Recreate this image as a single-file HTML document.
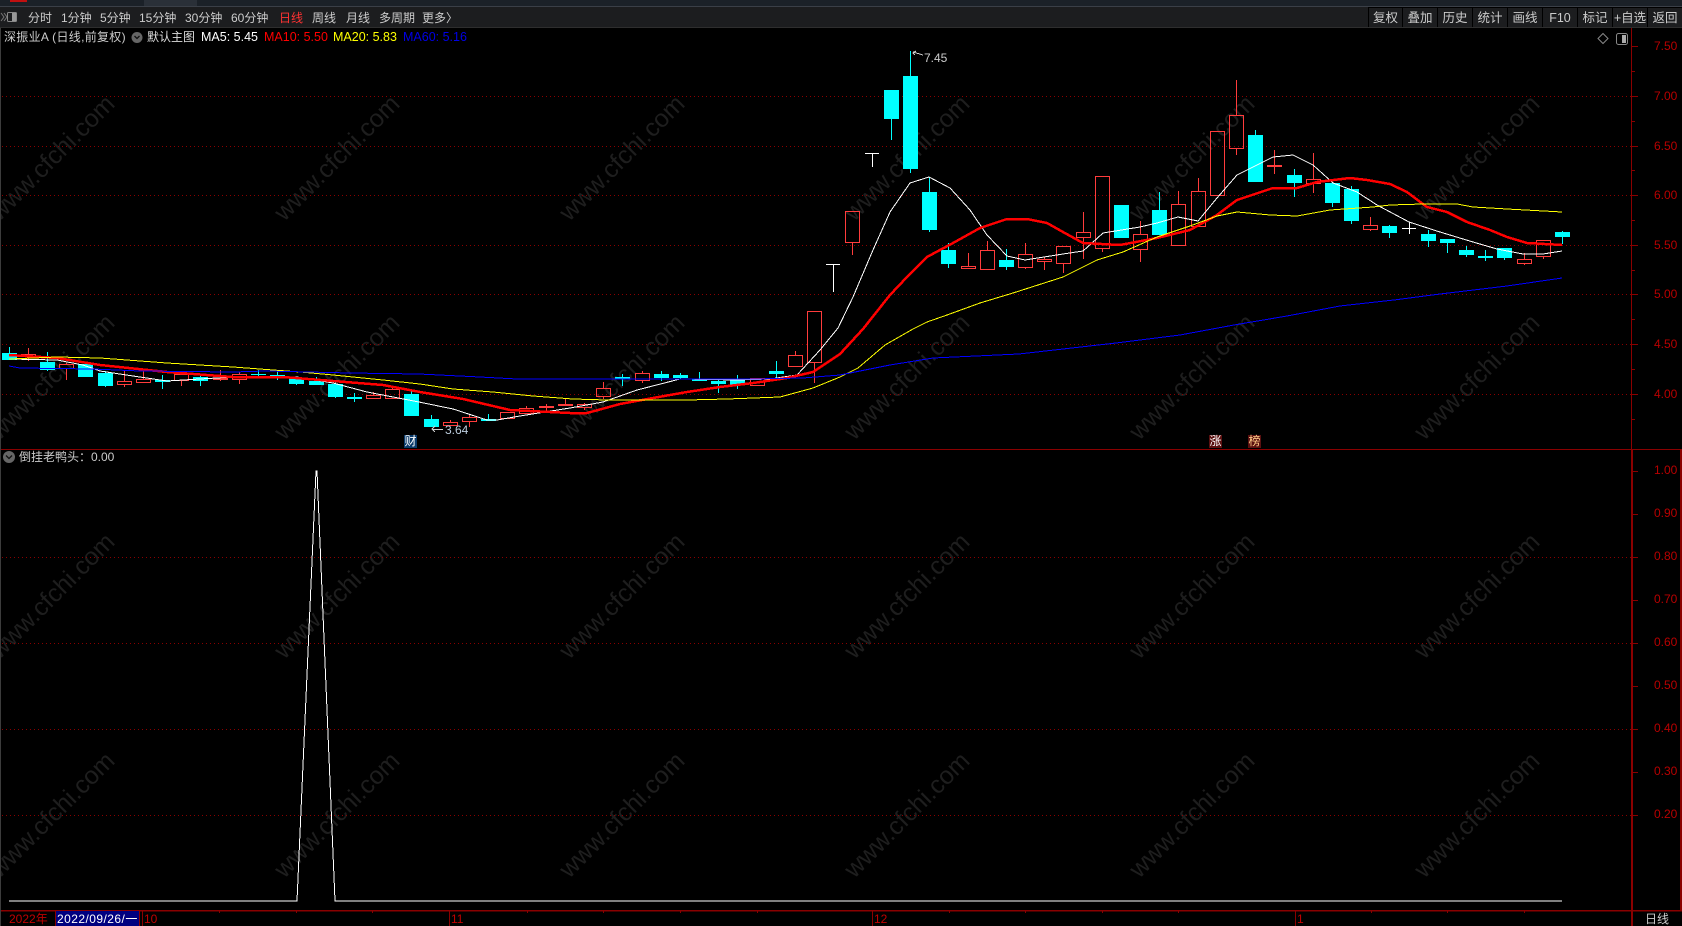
<!DOCTYPE html>
<html lang="zh">
<head>
<meta charset="utf-8">
<title>深振业A</title>
<style>
html,body{margin:0;padding:0;background:#000;}
#p{position:relative;width:1682px;height:926px;overflow:hidden;background:#000;font-family:"Liberation Sans","Noto Sans CJK SC",sans-serif;font-size:12px;color:#ccc;}
.t{position:absolute;white-space:pre;line-height:16px;height:16px;}
.a{position:absolute;left:1654px;white-space:pre;line-height:16px;color:#b80000;font-size:12px;}
.b{position:absolute;top:8px;height:19px;background:#1c1d1f;text-align:center;line-height:20px;font-size:12.5px;color:#ccc;}
.w{position:absolute;width:200px;height:30px;line-height:30px;text-align:center;font-size:25px;color:#1e1e1e;transform:rotate(-45deg);white-space:pre;}
.k{position:absolute;width:13px;height:13px;line-height:13px;text-align:center;font-size:12px;top:435px;}
svg{position:absolute;left:0;top:0;}
</style>
</head>
<body>
<div id="p">
<div style="position:absolute;left:0;top:0;width:1682px;height:6px;background:#1b2128"></div>
<div style="position:absolute;left:144px;top:0;width:53px;height:6px;background:#2a3038"></div>
<div style="position:absolute;left:10px;top:0;width:17px;height:2px;background:#c01010"></div>
<div style="position:absolute;left:0;top:6px;width:1682px;height:1px;background:#3a3f47"></div>
<div style="position:absolute;left:0;top:7px;width:1682px;height:20px;background:#1c1d1f"></div>
<div style="position:absolute;left:0;top:27px;width:1682px;height:1px;background:#2e2e2e"></div>

<div class="w" style="left:-48px;top:143px">www.cfchi.com</div>
<div class="w" style="left:237px;top:143px">www.cfchi.com</div>
<div class="w" style="left:522px;top:143px">www.cfchi.com</div>
<div class="w" style="left:807px;top:143px">www.cfchi.com</div>
<div class="w" style="left:1092px;top:143px">www.cfchi.com</div>
<div class="w" style="left:1377px;top:143px">www.cfchi.com</div>
<div class="w" style="left:-48px;top:362px">www.cfchi.com</div>
<div class="w" style="left:237px;top:362px">www.cfchi.com</div>
<div class="w" style="left:522px;top:362px">www.cfchi.com</div>
<div class="w" style="left:807px;top:362px">www.cfchi.com</div>
<div class="w" style="left:1092px;top:362px">www.cfchi.com</div>
<div class="w" style="left:1377px;top:362px">www.cfchi.com</div>
<div class="w" style="left:-48px;top:581px">www.cfchi.com</div>
<div class="w" style="left:237px;top:581px">www.cfchi.com</div>
<div class="w" style="left:522px;top:581px">www.cfchi.com</div>
<div class="w" style="left:807px;top:581px">www.cfchi.com</div>
<div class="w" style="left:1092px;top:581px">www.cfchi.com</div>
<div class="w" style="left:1377px;top:581px">www.cfchi.com</div>
<div class="w" style="left:-48px;top:800px">www.cfchi.com</div>
<div class="w" style="left:237px;top:800px">www.cfchi.com</div>
<div class="w" style="left:522px;top:800px">www.cfchi.com</div>
<div class="w" style="left:807px;top:800px">www.cfchi.com</div>
<div class="w" style="left:1092px;top:800px">www.cfchi.com</div>
<div class="w" style="left:1377px;top:800px">www.cfchi.com</div>

<svg width="1682" height="926" viewBox="0 0 1682 926" shape-rendering="crispEdges" fill="none">
<!-- frame -->
<path d="M0.5 28V926" stroke="#3c3c3c"/>
<path d="M1631.5 28V449" stroke="#8a0000"/>
<path d="M1632 449V926" stroke="#8a0000" stroke-width="2"/>
<path d="M1 449.5H1682" stroke="#8a0000"/>
<path d="M1 910.5H1682" stroke="#8a0000" stroke-width="1.5"/>
<path d="M1681 449V910" stroke="#8a0000" stroke-width="2"/>
<!-- grid -->
<path d="M2 96.5H1631M2 146.5H1631M2 195.5H1631M2 245.5H1631M2 294.5H1631M2 344.5H1631M2 394.5H1631M2 557.5H1631M2 643.5H1631M2 729.5H1631M2 815.5H1631" stroke="#8a0000" stroke-dasharray="1 3"/>
<!-- ticks -->
<path d="M1632 46.5h6M1632 96.5h6M1632 146.5h6M1632 195.5h6M1632 245.5h6M1632 294.5h6M1632 344.5h6M1632 394.5h6M1632 71.5h3M1632 121.5h3M1632 170.5h3M1632 220.5h3M1632 270.5h3M1632 319.5h3M1632 369.5h3M1632 419.5h3" stroke="#8a0000"/>
<path d="M1633 471.5h5M1633 514.5h5M1633 557.5h5M1633 600.5h5M1633 643.5h5M1633 686.5h5M1633 729.5h5M1633 772.5h5M1633 815.5h5" stroke="#8a0000"/>
<!-- date axis -->
<path d="M55.5 911V926M139.5 911V926M142.5 911V926M449.5 911V926M872.5 911V926M1295.5 911V926" stroke="#8a0000"/>
<path d="M219.5 911v2M296.5 911v2M372.5 911v2M527.5 911v2M603.5 911v2M680.5 911v2M757.5 911v2M949.5 911v2M1025.5 911v2M1102.5 911v2M1178.5 911v2M1371.5 911v2M1447.5 911v2M1524.5 911v2" stroke="#8a0000"/>
<!-- cyan candles -->
<path fill="#00ffff" d="M2 353h15v7h-15zM9 347h1v6h-1zM40 362h15v8h-15zM47 352h1v19h-1zM78 364h15v13h-15zM98 373h15v13h-15zM105 371h1v16h-1zM155 380h15v2h-15zM162 375h1v14h-1zM193 377h15v4h-15zM200 375h1v11h-1zM251 374h15v1h-15zM258 370h1v7h-1zM270 375h15v2h-15zM277 372h1v8h-1zM289 379h15v5h-15zM296 379h1v6h-1zM309 381h15v4h-15zM316 377h1v8h-1zM328 384h15v13h-15zM335 380h1v18h-1zM347 397h15v2h-15zM354 393h1v9h-1zM404 394h15v22h-15zM411 390h1v4h-1zM424 419h15v8h-15zM431 415h1v4h-1zM481 419h15v2h-15zM488 414h1v7h-1zM615 377h15v2h-15zM622 374h1v12h-1zM654 374h15v4h-15zM661 371h1v10h-1zM673 375h15v3h-15zM680 373h1v6h-1zM692 379h15v2h-15zM699 372h1v9h-1zM711 381h15v3h-15zM718 379h1v14h-1zM730 380h15v5h-15zM737 375h1v14h-1zM769 371h15v3h-15zM776 361h1v17h-1zM884 90h15v29h-15zM891 119h1v21h-1zM903 76h15v93h-15zM910 51h1v122h-1zM922 192h15v38h-15zM929 177h1v55h-1zM941 250h15v14h-15zM948 243h1v25h-1zM999 260h15v7h-15zM1006 249h1v21h-1zM1114 205h15v33h-15zM1152 210h15v25h-15zM1159 192h1v18h-1zM1248 135h15v47h-15zM1255 130h1v5h-1zM1287 175h15v8h-15zM1294 169h1v28h-1zM1325 183h15v20h-15zM1332 203h1v4h-1zM1344 189h15v32h-15zM1351 186h1v38h-1zM1382 226h15v7h-15zM1389 225h1v13h-1zM1421 234h15v7h-15zM1428 230h1v17h-1zM1440 239h15v4h-15zM1447 243h1v10h-1zM1459 250h15v5h-15zM1466 246h1v11h-1zM1478 256h15v2h-15zM1485 250h1v11h-1zM1497 248h15v10h-15zM1504 258h1v2h-1zM1555 232h15v5h-15zM1562 231h1v13h-1z"/>
<!-- red candles -->
<path stroke="#ff3c3c" d="M21.5 354.5h14v2h-14zM28.5 348V354M28.5 357V361M59.5 364.5h14v4h-14zM66.5 363V364M66.5 369V380M117.5 381.5h14v3h-14zM124.5 370V381M124.5 385V387M136.5 379.5h14v3h-14zM143.5 371V379M174.5 374.5h14v6h-14zM181.5 371V374M181.5 381V386M213.5 378.5h14v1h-14zM220.5 370V378M220.5 380V381M232.5 374.5h14v5h-14zM239.5 372V374M239.5 380V384M366.5 395.5h14v3h-14zM373.5 392V395M385.5 389.5h14v9h-14zM392.5 388V389M443.5 422.5h14v3h-14zM450.5 420V422M462.5 417.5h14v4h-14zM469.5 415V417M469.5 422V427M500.5 412.5h14v6h-14zM519.5 408.5h14v5h-14zM526.5 406V408M539.5 406.5h14v1h-14zM546.5 404V406M546.5 408V412M558.5 404.5h14v1h-14zM565.5 399V404M577.5 404.5h14v3h-14zM584.5 403V404M584.5 408V410M596.5 388.5h14v8h-14zM603.5 382V388M603.5 397V399M635.5 373.5h14v7h-14zM642.5 371V373M642.5 381V383M750.5 378.5h14v7h-14zM788.5 355.5h14v11h-14zM795.5 351V355M807.5 311.5h14v51h-14zM814.5 363V383M845.5 211.5h14v31h-14zM852.5 243V255M961.5 266.5h14v2h-14zM968.5 253V266M980.5 250.5h14v19h-14zM987.5 241V250M1018.5 254.5h14v13h-14zM1025.5 243V254M1025.5 268V269M1037.5 259.5h14v2h-14zM1044.5 257V259M1044.5 262V270M1056.5 246.5h14v17h-14zM1063.5 264V273M1076.5 232.5h14v5h-14zM1083.5 212V232M1083.5 238V259M1095.5 176.5h14v72h-14zM1102.5 249V252M1133.5 234.5h14v15h-14zM1140.5 221V234M1140.5 250V262M1171.5 204.5h14v41h-14zM1178.5 191V204M1191.5 191.5h14v35h-14zM1198.5 178V191M1210.5 131.5h14v64h-14zM1229.5 115.5h14v33h-14zM1236.5 80V115M1236.5 149V155M1267.5 165.5h14v1h-14zM1274.5 150V165M1274.5 167V174M1306.5 179.5h14v4h-14zM1313.5 153V179M1313.5 184V193M1363.5 225.5h14v4h-14zM1370.5 217V225M1370.5 230V231M1517.5 259.5h14v4h-14zM1524.5 253V259M1524.5 264V265M1536.5 240.5h14v16h-14zM1543.5 257V259"/>
<!-- white doji -->
<path stroke="#ffffff" d="M826 264.5h14M833.5 264V292M865 153.5h14M872.5 153V167M1402 228.5h14M1409.5 222V234"/>
<!-- MA5 -->
<polyline stroke="#ffffff" stroke-width="1" points="9,359 57,360 83,365 100,371 133,376 167,381 200,379 233,377 297,377 333,383 367,392 419,402 453,409 487,420 497,420 520,416 570,408 603,402 637,390 680,379 737,380 770,379 797,375 820,350 838,328 853,297 873,250 890,212 910,183 929,177 950,188 970,210 987,235 1007,256 1025,260 1063,254 1083,251 1092,243 1103,233 1140,227 1157,223 1178,217 1198,221 1217,198 1237,175 1273,157 1293,155 1313,165 1333,183 1357,192 1377,205 1409,222 1440,232 1473,242 1497,249 1523,254 1543,254 1562,251"/>
<!-- MA10 -->
<polyline stroke="#ff0000" stroke-width="2.5" points="9,355 57,358 100,365 167,372 233,377 283,377 333,381 383,385 420,392 463,399 510,410 570,413 587,413 620,404 653,398 687,392 720,387 753,383 787,378 813,372 840,354 863,329 890,295 907,277 927,257 953,243 980,228 1007,219 1027,219 1047,223 1063,232 1083,243 1120,245 1157,238 1190,230 1217,215 1237,200 1273,188 1297,188 1317,182 1350,178 1367,180 1390,184 1407,192 1427,207 1447,212 1467,222 1490,230 1507,237 1527,243 1562,245"/>
<!-- MA20 -->
<polyline stroke="#ffff00" stroke-width="1" points="9,359 57,357 100,358 167,363 233,367 300,372 333,375 383,380 420,384 453,389 493,392 533,396 573,399 607,400 687,400 727,399 780,397 813,388 840,377 858,368 885,345 913,329 927,322 947,315 980,303 1013,293 1063,277 1097,260 1123,252 1157,237 1190,226 1217,216 1237,212 1270,215 1297,216 1330,210 1373,207 1390,205 1423,204 1457,204 1473,207 1507,209 1562,212"/>
<!-- MA60 -->
<polyline stroke="#0000ff" stroke-width="1" points="9,366 20,368 93,369 140,371 233,372 266,371 350,373 419,374 480,377 517,379 577,379 687,379 753,379 803,378 840,375 890,365 933,358 1019,354 1116,343 1180,335 1234,325 1287,316 1340,306 1394,300 1440,294 1507,286 1562,278"/>
<!-- lower indicator -->
<polyline stroke="#ffffff" stroke-width="1" points="9,901 297,901 316,471 317,471 335,901 1562,901"/>
<!-- annotations -->
<path stroke="#cfcfcf" d="M913 52l10 3M916 51l-3 2l2 2M432 429.5h11M435 426l-3 3l3 3"/>
</svg>

<svg width="1682" height="60" viewBox="0 0 1682 60" fill="none" style="pointer-events:none">
<path d="M1 13l3 4l-3 4M4 13l3 4l-3 4" stroke="#777" stroke-width="1"/>
<rect x="7.5" y="12.5" width="9" height="9" rx="1" stroke="#888"/>
<rect x="12" y="13" width="4" height="8" fill="#999"/>
<circle cx="137" cy="37.5" r="5.5" fill="#666"/>
<path d="M134.5 36l2.5 2.5l2.5-2.5" stroke="#111" stroke-width="1.3"/>
<path d="M1603 33.5l5 5l-5 5l-5-5z" stroke="#888"/>
<rect x="1616.5" y="33.5" width="11" height="11" rx="2" stroke="#888"/>
<rect x="1622" y="35" width="4" height="8" fill="#aaa"/>
</svg>
<svg width="20" height="20" viewBox="0 0 20 20" fill="none" style="left:0;top:447px">
<circle cx="9" cy="10" r="6" fill="#666"/>
<path d="M6 8.5l3 3l3-3" stroke="#111" stroke-width="1.3"/>
</svg>

<span class="t" style="left:28px;top:10px">分时</span>
<span class="t" style="left:61px;top:10px">1分钟</span>
<span class="t" style="left:100px;top:10px">5分钟</span>
<span class="t" style="left:139px;top:10px">15分钟</span>
<span class="t" style="left:185px;top:10px">30分钟</span>
<span class="t" style="left:231px;top:10px">60分钟</span>
<span class="t" style="left:279px;top:10px;color:#ff3232">日线</span>
<span class="t" style="left:312px;top:10px">周线</span>
<span class="t" style="left:346px;top:10px">月线</span>
<span class="t" style="left:379px;top:10px">多周期</span>
<span class="t" style="left:422px;top:10px">更多</span>
<span class="t" style="left:446px;top:10px">〉</span>

<div style="position:absolute;left:1368px;top:7px;width:314px;height:20px;background:#000"></div>
<div class="b" style="left:1369px;width:33px">复权</div>
<div class="b" style="left:1403px;width:34px">叠加</div>
<div class="b" style="left:1438px;width:34px">历史</div>
<div class="b" style="left:1473px;width:34px">统计</div>
<div class="b" style="left:1508px;width:34px">画线</div>
<div class="b" style="left:1543px;width:34px">F10</div>
<div class="b" style="left:1578px;width:34px">标记</div>
<div class="b" style="left:1613px;width:34px">+自选</div>
<div class="b" style="left:1648px;width:34px">返回</div>

<span class="t" style="left:4px;top:29px;letter-spacing:.3px">深振业A (日线,前复权)</span>
<span class="t" style="left:147px;top:29px;color:#ddd">默认主图</span>
<span class="t" style="left:201px;top:29px;color:#fff;font-size:12.5px">MA5: 5.45</span>
<span class="t" style="left:264px;top:29px;color:#ff0000;font-size:12.5px">MA10: 5.50</span>
<span class="t" style="left:333px;top:29px;color:#ffff00;font-size:12.5px">MA20: 5.83</span>
<span class="t" style="left:403px;top:29px;color:#0000e6;font-size:12.5px">MA60: 5.16</span>

<span class="t" style="left:19px;top:449px">倒挂老鸭头：0.00</span>
<span class="t" style="left:924px;top:50px">7.45</span>
<span class="t" style="left:445px;top:422px;color:#bcd">3.64</span>

<div class="k" style="left:404px;background:#0a3a6a;color:#fff">财</div>
<div class="k" style="left:1209px;background:#5a1010;color:#fff">涨</div>
<div class="k" style="left:1248px;background:#5a1010;color:#fc8">榜</div>

<span class="a" style="top:38px">7.50</span>
<span class="a" style="top:88px">7.00</span>
<span class="a" style="top:138px">6.50</span>
<span class="a" style="top:187px">6.00</span>
<span class="a" style="top:237px">5.50</span>
<span class="a" style="top:286px">5.00</span>
<span class="a" style="top:336px">4.50</span>
<span class="a" style="top:386px">4.00</span>
<span class="a" style="top:462px">1.00</span>
<span class="a" style="top:505px">0.90</span>
<span class="a" style="top:548px">0.80</span>
<span class="a" style="top:591px">0.70</span>
<span class="a" style="top:634px">0.60</span>
<span class="a" style="top:677px">0.50</span>
<span class="a" style="top:720px">0.40</span>
<span class="a" style="top:763px">0.30</span>
<span class="a" style="top:806px">0.20</span>

<span class="t" style="left:9px;top:911px;color:#c00000">2022年</span>
<div style="position:absolute;left:56px;top:911px;width:83px;height:15px;background:#000080"></div>
<span class="t" style="left:57px;top:911px;color:#fff;letter-spacing:.45px">2022/09/26/一</span>
<span class="t" style="left:144px;top:911px;color:#c00000">10</span>
<span class="t" style="left:451px;top:911px;color:#c00000">11</span>
<span class="t" style="left:874px;top:911px;color:#c00000">12</span>
<span class="t" style="left:1297px;top:911px;color:#c00000">1</span>
<span class="t" style="left:1645px;top:911px">日线</span>
</div>
</body>
</html>
